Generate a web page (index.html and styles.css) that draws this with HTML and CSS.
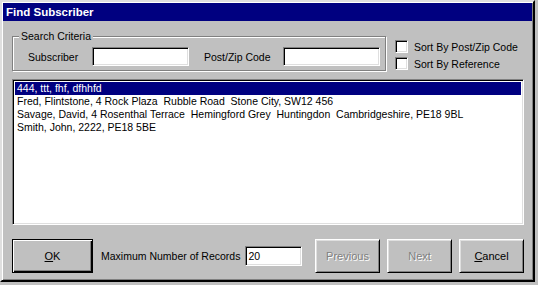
FILE: index.html
```html
<!DOCTYPE html>
<html lang="en">
<head>
    <meta charset="UTF-8">
    <title>Find Subscriber</title>
    <link rel="stylesheet" href="styles.css">
</head>
<body>
<div class="window">
    <div class="titlebar">Find Subscriber</div>
    <div class="content">
        <div class="top-row">
            <fieldset class="criteria">
                <legend>Search Criteria</legend>
                <div class="criteria-row">
                    <label class="label-subscriber">Subscriber</label>
                    <input class="text-input field-wide" type="text">
                    <label class="label-post">Post/Zip Code</label>
                    <input class="text-input field-wide" type="text">
                </div>
            </fieldset>
            <div class="sort-options">
                <label class="check"><span class="check-box"></span>Sort By Post/Zip Code</label>
                <label class="check"><span class="check-box"></span>Sort By Reference</label>
            </div>
        </div>

        <ul class="results">
            <li class="selected">444, ttt, fhf, dfhhfd</li>
            <li>Fred, Flintstone, 4 Rock Plaza  Rubble Road  Stone City, SW12 456</li>
            <li>Savage, David, 4 Rosenthal Terrace  Hemingford Grey  Huntingdon  Cambridgeshire, PE18 9BL</li>
            <li>Smith, John, 2222, PE18 5BE</li>
        </ul>

        <div class="actions">
            <button class="btn btn-default btn-ok"><u>O</u>K</button>
            <label class="label-max">Maximum Number of Records</label>
            <input class="text-input field-max" type="text" value="20">
            <button class="btn btn-small btn-prev" disabled>Previous</button>
            <button class="btn btn-small" disabled>Next</button>
            <button class="btn btn-small"><u>C</u>ancel</button>
        </div>
    </div>
</div>
</body>
</html>
```

FILE: styles.css
```css
body {
    margin: 0;
    background: #c0c0c0;
    font-family: "Liberation Sans", Arial, sans-serif;
    font-size: 10.5px;
    color: #000;
}

.window {
    width: 535px;
    height: 282px;
    box-sizing: border-box;
    padding: 1px;
    background: #c0c0c0;
    border: 2px solid;
    border-color: #dfdfdf #000 #000 #dfdfdf;
    box-shadow: inset 1px 1px #fff, inset -1px -1px #808080;
}

.titlebar {
    height: 18px;
    line-height: 18px;
    padding-left: 3px;
    background: #000080;
    color: #fff;
    font-size: 11.5px;
    font-weight: bold;
}

.content {
    padding: 9px 8px 0 9px;
}

.top-row {
    display: flex;
    align-items: flex-start;
}

.criteria {
    width: 374px;
    box-sizing: border-box;
    margin: 0;
    padding: 4px 0 4px 0;
    border: 1px solid #808080;
    box-shadow: 1px 1px 0 #fff, inset 1px 1px 0 #fff;
}

.criteria legend {
    margin-left: 6px;
    padding: 0 2px;
    line-height: 13px;
    background: #c0c0c0;
}

.criteria-row {
    display: flex;
    align-items: center;
    padding-left: 15px;
}

.label-subscriber {
    width: 64px;
}

.label-post {
    width: 79px;
    margin-left: 15px;
}

.text-input {
    height: 19px;
    box-sizing: border-box;
    margin: 0;
    padding: 0 2px;
    font: inherit;
    background: #fff;
    border: 1px solid;
    border-color: #808080 #fff #fff #808080;
    box-shadow: inset 1px 1px #000, inset -1px -1px #dfdfdf;
    outline: none;
}

.field-wide {
    width: 97px;
}

.sort-options {
    display: flex;
    flex-direction: column;
    margin-left: 9px;
    padding-top: 8px;
}

.check {
    display: flex;
    align-items: center;
    height: 17px;
}

.check-box {
    width: 13px;
    height: 13px;
    box-sizing: border-box;
    margin-right: 6px;
    background: #fff;
    border: 1px solid;
    border-color: #808080 #fff #fff #808080;
    box-shadow: inset 1px 1px #000, inset -1px -1px #dfdfdf;
}

.results {
    list-style: none;
    margin: 7px 0 0 0;
    padding: 2px;
    height: 146px;
    box-sizing: border-box;
    background: #fff;
    border: 1px solid;
    border-color: #808080 #fff #fff #808080;
    box-shadow: inset 1px 1px #000, inset -1px -1px #dfdfdf;
}

.results li {
    height: 13px;
    line-height: 13px;
    padding-left: 2px;
    white-space: pre;
}

.results li.selected {
    background: #000080;
    color: #fff;
}

.actions {
    display: flex;
    align-items: center;
    margin-top: 14px;
}

.btn {
    height: 34px;
    box-sizing: border-box;
    padding: 0;
    font: inherit;
    font-size: 11px;
    color: #000;
    background: #c0c0c0;
    border: 1px solid;
    border-color: #fff #000 #000 #fff;
    box-shadow: inset 1px 1px #dfdfdf, inset -1px -1px #808080;
}

.btn-default {
    border-color: #000;
    box-shadow: inset 1px 1px #fff, inset -1px -1px #000, inset -2px -2px #808080;
}

.btn-ok {
    width: 81px;
}

.btn-small {
    width: 65px;
    margin-left: 7px;
}

.btn-prev {
    margin-left: auto;
}

.btn:disabled {
    color: #808080;
    text-shadow: 1px 1px 0 #fff;
}

.label-max {
    margin-left: 8px;
}

.field-max {
    width: 57px;
    height: 20px;
    margin-left: 5px;
}
```
